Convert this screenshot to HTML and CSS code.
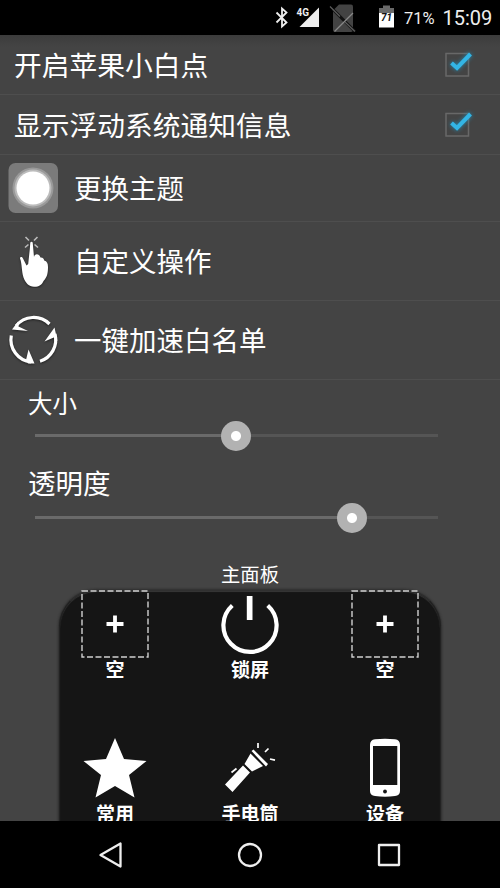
FILE: index.html
```
<!DOCTYPE html>
<html lang="zh-CN">
<head>
<meta charset="utf-8">
<title>设置</title>
<link rel="stylesheet" href="styles.css">
</head>
<body>
<div class="phone">
  <header class="status">
    <svg class="status-icons" width="144" height="35" viewBox="260 0 144 35">
      <path d="M276.500 12.500L286.500 22.500L282 26.500V8.500L286.500 12.500L276.500 22.500" fill="none" stroke="#eee" stroke-width="1.800"/>
      <path d="M319 7.500V27H299.500Z" fill="#eee"/>
      <text class="net" x="296.500" y="16.300" textLength="12.500" lengthAdjust="spacingAndGlyphs">4G</text>
      <path d="M339 4.500H351Q353 4.500 353 6.500V30Q353 32 351 32H335Q333 32 333 30V10.500Z" fill="#434343"/>
      <path d="M333 9.500L355 31.500" stroke="#111" stroke-width="3"/>
      <path d="M330 6.500L340 16.500M345 22L355 31.500" stroke="#5c5c5c" stroke-width="1.200"/>
      <path d="M334.500 31.500L353 13" stroke="#888" stroke-width="1.200"/>
      <path d="M379 13V8H383V5.500H390V8H394V13Z" fill="#696969"/>
      <path d="M379 13H394V27.500H379Z" fill="#fff"/>
      <text class="level" x="386.500" y="20.500" text-anchor="middle">71</text>
    </svg>
    <span class="percent">71%</span>
    <span class="clock">15:09</span>
  </header>

  <main class="content">
    <div class="row check-row">
      <span>开启苹果小白点</span>
      <svg class="check" width="34" height="34" viewBox="0 0 34 34"><rect class="box" x="5" y="5.500" width="22.500" height="22.500"/><path class="tick" d="M10.500 15L16 20L29.500 6"/></svg>
    </div>
    <div class="row check-row">
      <span>显示浮动系统通知信息</span>
      <svg class="check" width="34" height="34" viewBox="0 0 34 34"><rect class="box" x="5" y="5.500" width="22.500" height="22.500"/><path class="tick" d="M10.500 15L16 20L29.500 6"/></svg>
    </div>
    <div class="row theme-row">
      <svg class="row-icon" width="50" height="50" viewBox="0 0 50 50"><rect x="0.500" width="49.500" height="50" rx="7" fill="#7b7b7b"/><circle cx="25" cy="25" r="20.500" fill="#999"/><circle cx="25" cy="25" r="18.500" fill="#bbb"/><circle cx="25" cy="25" r="16.500" fill="#fff"/></svg>
      <span>更换主题</span>
    </div>
    <div class="row tall-row">
      <svg class="row-icon" width="50" height="54" viewBox="8 234 50 54">
        <path d="M25.500 237L29 240.500M37.500 237L34 240.500M25 247.500L28.500 244.500M38 247.500L34.500 244.500" stroke="#bbb" stroke-width="1.600"/>
        <path class="shadowed" d="M30.300 242.500Q31.500 241.200 32.700 242.500L34 257C34.500 253.500 39 253 40.500 257.500C43 257.300 44 259 44.200 260.500C47 261 48 263.500 48 267C48 272 47.500 277 43.500 281C42 285 38.500 287 34 286.800C29 286.700 25.500 283 23.500 277.500C21.500 271 22 263 20 258.500C20.200 256.500 22 256.700 23 258.500L26.500 265.500L28.200 264L29.800 249Z" fill="#fff"/>
      </svg>
      <span>自定义操作</span>
    </div>
    <div class="row tall-row">
      <svg class="row-icon" width="50" height="54" viewBox="8 313 50 54">
        <g class="shadowed">
          <path d="M49.500 324A22.500 22.500 0 0 0 16 326M11.300 335.500A22.500 22.500 0 0 0 31 362M40 361.200A22.500 22.500 0 0 0 55 334" fill="none" stroke="#fff" stroke-width="3.200"/>
          <path d="M18 321.500L12 329.500L28 331L18.500 326.500ZM28.500 349.500L26 360L28 363.500H34.500ZM44.500 341.500L54.500 327.500L57.500 341L53.800 337.500Z" fill="#fff"/>
        </g>
      </svg>
      <span>一键加速白名单</span>
    </div>

    <section class="setting size-setting">
      <h2>大小</h2>
      <div class="track"><div class="fill" style="width:49.800%"></div><div class="thumb" style="left:49.800%"></div></div>
    </section>
    <section class="setting alpha-setting">
      <h2>透明度</h2>
      <div class="track"><div class="fill" style="width:78.600%"></div><div class="thumb" style="left:78.600%"></div></div>
    </section>

    <h3 class="panel-title">主面板</h3>
    <div class="panel">
      <div class="cell">
        <svg width="68" height="68" viewBox="0 0 68 68"><rect class="dash" x="1" y="1" width="66" height="66"/><path class="plus" d="M25.500 34H42.500M34 25.500V42.500"/></svg>
        <span>空</span>
      </div>
      <div class="cell">
        <svg width="68" height="68" viewBox="216 590 68 68"><path d="M232.300 605.500A26.600 26.600 0 1 0 267.700 605.500" fill="none" stroke="#fff" stroke-width="4.200"/><path d="M246.800 596H252.500V620H246.800Z" fill="#fff"/></svg>
        <span>锁屏</span>
      </div>
      <div class="cell">
        <svg width="68" height="68" viewBox="0 0 68 68"><rect class="dash" x="1" y="1" width="66" height="66"/><path class="plus" d="M25.500 34H42.500M34 25.500V42.500"/></svg>
        <span>空</span>
      </div>
      <div class="cell">
        <svg width="68" height="68" viewBox="81 734 68 68"><path d="M115 738L124 759L146.500 761L129 775L134.500 797.500L115 786L95.500 797.500L101 775L83.500 761L106 759Z" fill="#fff"/></svg>
        <span>常用</span>
      </div>
      <div class="cell">
        <svg width="68" height="68" viewBox="216 734 68 68">
          <path d="M225 784.500L243 765.500L250 772.500L232.500 792ZM244.500 764L250.500 753.500L263 766L252 771.500ZM251.500 751L253.500 749.500L268 764L266 766.500Z" fill="#fff"/>
          <path d="M231.500 772.500L236.500 768.500M258 743V748M265 752L268.500 748.500M270 759L275 760.200" stroke="#fff" stroke-width="1.700"/>
        </svg>
        <span>手电筒</span>
      </div>
      <div class="cell">
        <svg width="68" height="68" viewBox="351 734 68 68"><path fill-rule="evenodd" d="M375 739.300Q385 738 395 739.300Q400 740 400 745V791Q400 795.500 395 796Q385 797.300 375 796Q370 795.500 370 791V745Q370 740 375 739.300ZM373 746V785H397.300V746Z" fill="#fff"/><circle cx="385" cy="791.500" r="1.900" fill="#151515"/></svg>
        <span>设备</span>
      </div>
    </div>
  </main>

  <nav class="navbar">
    <svg width="34" height="34" viewBox="0 0 34 34"><path d="M6.500 17L26.500 5.500V28.500Z"/></svg>
    <svg width="34" height="34" viewBox="0 0 34 34"><circle cx="17" cy="17" r="11"/></svg>
    <svg width="34" height="34" viewBox="0 0 34 34"><rect x="7" y="7" width="20" height="20"/></svg>
  </nav>
</div>
</body>
</html>
```
FILE: styles.css
```
* { box-sizing: border-box; }
body { margin: 0; font-family: "Noto Sans CJK SC", sans-serif; color: #fff; }
.phone { width: 500px; height: 888px; display: flex; flex-direction: column; background: #000; overflow: hidden; }

.status { height: 35px; flex: none; display: flex; align-items: center; justify-content: flex-end; padding-right: 9px; font-family: Roboto, sans-serif; color: #eee; }
.status-icons { display: block; flex: none; }
.net { font: 700 10px Roboto, sans-serif; fill: #eee; }
.level { font: italic 700 10px Roboto, sans-serif; fill: #111; }
.percent { width: 38.500px; font-size: 16.500px; line-height: 35px; padding-top: 1px; }
.clock { font-size: 20px; line-height: 35px; padding-top: 1px; white-space: nowrap; width: 48.500px; }

.content { height: 786px; flex: none; overflow: hidden; background: linear-gradient(#3c3c3c, #444 12px, #444); }
.row { display: flex; align-items: center; border-bottom: 1px solid #4e4e4e; font-size: 27.500px; line-height: 36px; }
.row span { white-space: nowrap; padding-bottom: 2px; }
.check-row { height: 60px; justify-content: space-between; padding: 0 22px 0 14px; font-size: 27.750px; }
.check { margin-right: 3px; }
.box { fill: none; stroke: #686868; stroke-width: 1.500; }
.tick { fill: none; stroke: #33b5e5; stroke-width: 4; filter: drop-shadow(0 0 2px #218cb5); }
.theme-row { height: 67px; padding-left: 8px; }
.tall-row { height: 79px; padding-left: 8px; }
.row-icon { flex: none; margin-right: 16px; }
.shadowed { filter: drop-shadow(0 1px 1px #222); }

.setting { padding: 0 62px 0 28px; }
.size-setting { height: 80px; padding-top: 5px; }
.alpha-setting { height: 98px; padding-top: 4px; }
.setting h2 { margin: 0; font-size: 24.500px; line-height: 36px; font-weight: 400; }
.alpha-setting h2 { font-size: 27.500px; }
.track { position: relative; height: 3px; margin: 13px 0 0 7px; background: #555; }
.alpha-setting .track { margin-top: 16px; }
.fill { height: 3px; background: #6a6a6a; }
.thumb { position: absolute; top: 50%; width: 30px; height: 30px; margin: -15px 0 0 -15px; border-radius: 50%; background: radial-gradient(circle, #fff 4.500px, #b2b2b2 5.500px); }

.panel-title { margin: 0; padding: 1px 0; text-align: center; font-size: 19.300px; line-height: 30px; font-weight: 400; }
.panel { width: 382px; height: 382px; margin: 0 auto; border: 1px solid #222; border-top: 1px solid #303030; border-radius: 37px; background: #151515; box-shadow: 0 0 3px #151515, inset 0 1px 1px #383838; display: grid; grid-template-columns: repeat(3, 135px); grid-auto-rows: 144px; justify-content: center; }
.cell { display: flex; flex-direction: column; align-items: center; font-size: 19px; line-height: 24px; font-weight: 700; }
.cell svg { flex: none; margin-top: -1px; }
.cell span { margin-top: -1px; }
.dash { fill: none; stroke: #d0d0d0; stroke-width: 1.400; stroke-dasharray: 6 2.500; }
.plus { stroke: #fff; stroke-width: 3.800; }

.navbar { height: 67px; flex: none; display: flex; align-items: center; justify-content: center; gap: 105px; }
.navbar svg { fill: none; stroke: #eee; stroke-width: 2.300; stroke-linejoin: round; }
```
